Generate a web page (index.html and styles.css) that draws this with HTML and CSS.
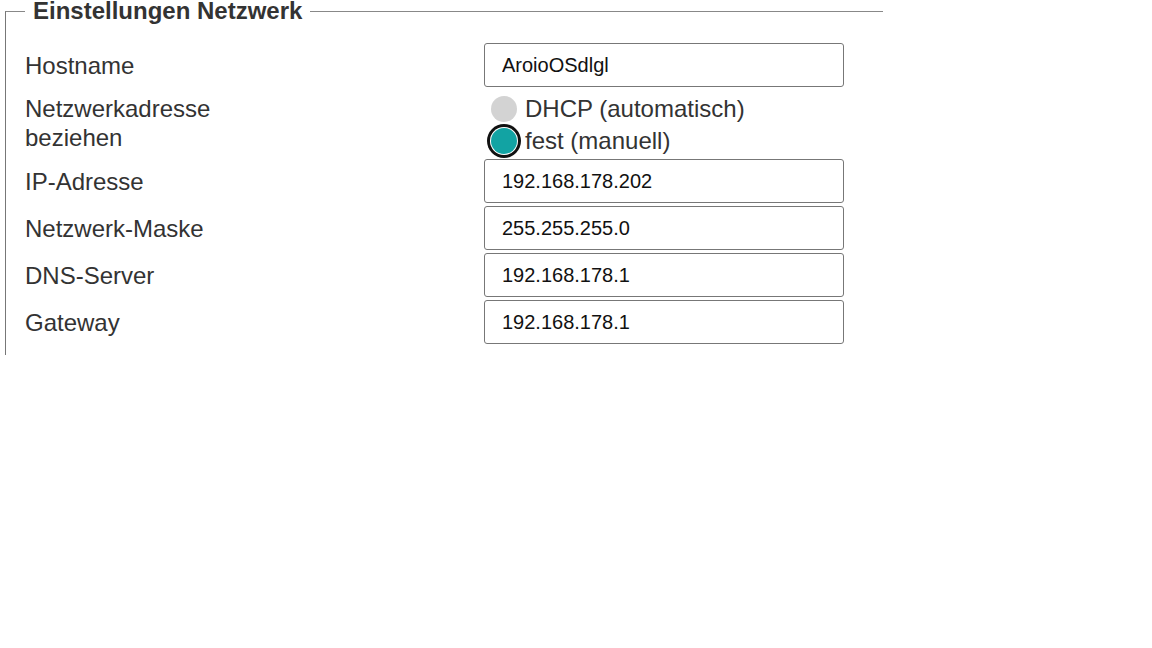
FILE: index.html
```html
<!DOCTYPE html>
<html lang="de">
<head>
    <meta charset="UTF-8">
    <meta name="viewport" content="width=device-width, initial-scale=1.0">
    <title>Einstellungen Netzwerk</title>
    <link rel="stylesheet" href="styles.css">
</head>
<body>
    <fieldset class="settings">
        <legend>Einstellungen Netzwerk</legend>

        <div class="row">
            <label for="hostname">Hostname</label>
            <input type="text" id="hostname" value="AroioOSdlgl">
        </div>

        <div class="row">
            <span class="label wrap">Netzwerkadresse beziehen</span>
            <div class="radios">
                <label class="radio"><input type="radio" name="mode" value="dhcp"> DHCP (automatisch)</label>
                <label class="radio"><input type="radio" name="mode" value="static" checked class="focused"> fest (manuell)</label>
            </div>
        </div>

        <div class="row">
            <label for="ip">IP-Adresse</label>
            <input type="text" id="ip" value="192.168.178.202">
        </div>

        <div class="row">
            <label for="mask">Netzwerk-Maske</label>
            <input type="text" id="mask" value="255.255.255.0">
        </div>

        <div class="row">
            <label for="dns">DNS-Server</label>
            <input type="text" id="dns" value="192.168.178.1">
        </div>

        <div class="row">
            <label for="gateway">Gateway</label>
            <input type="text" id="gateway" value="192.168.178.1">
        </div>
    </fieldset>
</body>
</html>
```

FILE: styles.css
```css
body {
    font-family: 'Liberation Sans', Arial, sans-serif;
    background-color: #fff;
    margin: 0;
    padding: 0;
}

.settings {
    width: 858px;
    margin: 0 0 0 5px;
    padding: 21px 0 8px 19px;
    border: none;
    border-top: 1px solid #888;
    border-left: 1px solid #777;
    box-sizing: content-box;
}

.settings legend {
    font-size: 24px;
    line-height: 22px;
    font-weight: bold;
    color: #333;
    padding: 0 8px;
    margin-left: 0;
}

.row {
    display: grid;
    grid-template-columns: 459px 360px;
    align-items: center;
    margin-bottom: 3px;
    font-size: 24px;
    color: #333;
}

.row > label,
.row > .label {
    line-height: 29px;
}

.label.wrap {
    max-width: 210px;
    align-self: start;
    padding-top: 4px;
}

.row input[type="text"] {
    height: 44px;
    box-sizing: border-box;
    padding: 0 17px;
    font-family: 'Liberation Sans', Arial, sans-serif;
    font-size: 20px;
    color: #111;
    border: 1px solid #777;
    border-radius: 3px;
    margin: 0;
}

.radios {
    display: flex;
    flex-direction: column;
    padding-top: 3px;
    margin-bottom: -1px;
}

.radio {
    display: flex;
    align-items: center;
    height: 32px;
    font-size: 24px;
    color: #333;
}

.radio input {
    appearance: none;
    -webkit-appearance: none;
    width: 26px;
    height: 26px;
    border-radius: 50%;
    background-color: #d3d3d3;
    margin: 0 8px 0 7px;
    border: none;
}

.radio input:checked {
    background-color: #12a3a3;
}

.radio input.focused {
    box-shadow: 0 0 0 1px #fff, 0 0 0 4px #111;
}
```
